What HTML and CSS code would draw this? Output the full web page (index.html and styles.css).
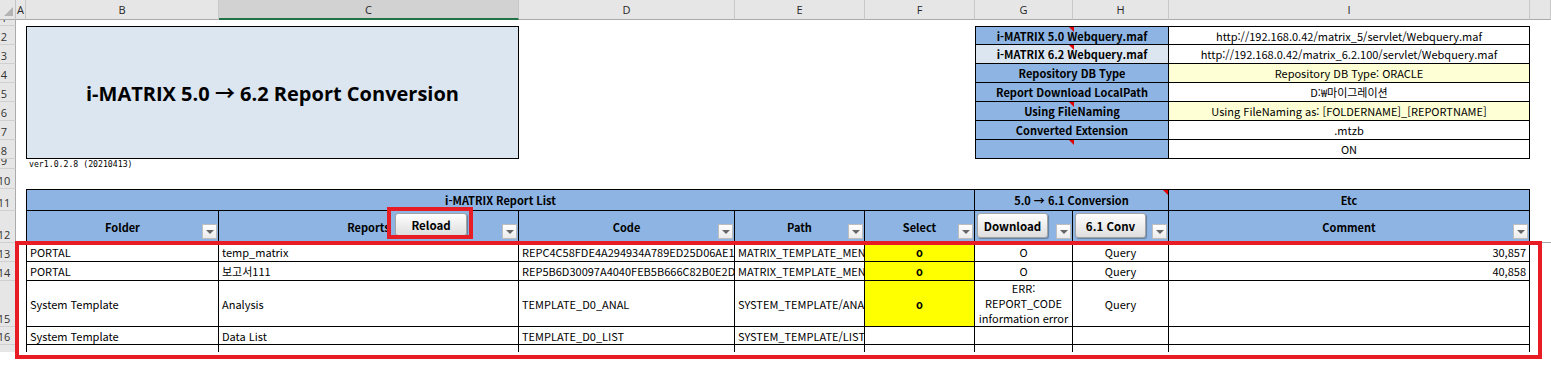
FILE: index.html
```html
<!DOCTYPE html>
<html lang="ko">
<head>
  <meta charset="UTF-8" />
  <title>i-MATRIX 5.0 → 6.2 Report Conversion</title>
  <link rel="stylesheet" href="styles.css">
</head>
<body>
  <div class="sheet">
    <!-- 열 머리글 -->
    <div class="corner"></div>
    <div class="ch">A</div>
    <div class="ch">B</div>
    <div class="ch sel">C</div>
    <div class="ch">D</div>
    <div class="ch">E</div>
    <div class="ch">F</div>
    <div class="ch">G</div>
    <div class="ch">H</div>
    <div class="ch">I</div>
    <div class="ch"></div>

    <!-- 1 -->
    <div class="rh"><span>1</span></div>
    <div class="c sp10"></div>

    <!-- 2 -->
    <div class="rh"><span>2</span></div>
    <div class="c"></div>
    <div class="title">i-MATRIX 5.0 → 6.2 Report Conversion</div>
    <div class="c sp3"></div>
    <div class="c b bl bt lbl sp2">i-MATRIX 5.0 Webquery.maf<i class="memo"></i></div>
    <div class="c b bt ctr">http://192.168.0.42/matrix_5/servlet/Webquery.maf</div>
    <div class="c"></div>

    <!-- 3 -->
    <div class="rh"><span>3</span></div>
    <div class="c"></div>
    <div class="c sp3"></div>
    <div class="c b bl lbl light sp2">i-MATRIX 6.2 Webquery.maf<i class="memo"></i></div>
    <div class="c b ctr">http://192.168.0.42/matrix_6.2.100/servlet/Webquery.maf</div>
    <div class="c"></div>

    <!-- 4 -->
    <div class="rh"><span>4</span></div>
    <div class="c"></div>
    <div class="c sp3"></div>
    <div class="c b bl lbl sp2">Repository DB Type</div>
    <div class="c b ctr cream">Repository DB Type: ORACLE</div>
    <div class="c"></div>

    <!-- 5 -->
    <div class="rh"><span>5</span></div>
    <div class="c"></div>
    <div class="c sp3"></div>
    <div class="c b bl lbl sp2">Report Download LocalPath</div>
    <div class="c b ctr">D:₩마이그레이션</div>
    <div class="c"></div>

    <!-- 6 -->
    <div class="rh"><span>6</span></div>
    <div class="c"></div>
    <div class="c sp3"></div>
    <div class="c b bl lbl sp2">Using FileNaming<i class="memo"></i></div>
    <div class="c b ctr cream">Using FileNaming as: [FOLDERNAME]_[REPORTNAME]</div>
    <div class="c"></div>

    <!-- 7 -->
    <div class="rh"><span>7</span></div>
    <div class="c"></div>
    <div class="c sp3"></div>
    <div class="c b bl lbl sp2">Converted Extension</div>
    <div class="c b ctr">.mtzb</div>
    <div class="c"></div>

    <!-- 8 -->
    <div class="rh"><span>8</span></div>
    <div class="c"></div>
    <div class="c sp3"></div>
    <div class="c b bl lbl sp2"><i class="memo"></i></div>
    <div class="c b ctr">ON</div>
    <div class="c"></div>

    <!-- 9 -->
    <div class="rh"><span>9</span></div>
    <div class="c"></div>
    <div class="c ver sp9">ver1.0.2.8 (20210413)</div>

    <!-- 10 -->
    <div class="rh"><span>10</span></div>
    <div class="c sp10"></div>

    <!-- 11 -->
    <div class="rh"><span>11</span></div>
    <div class="c"></div>
    <div class="c b bl bt hd ctr sp5">i-MATRIX Report List</div>
    <div class="c b bt hd ctr sp2">5.0 → 6.1 Conversion<i class="memo end"></i></div>
    <div class="c b bt hd ctr">Etc</div>
    <div class="c"></div>

    <!-- 12 -->
    <div class="rh"><span>12</span></div>
    <div class="c"></div>
    <div class="c b bl hd ctr">Folder<i class="filter"></i></div>
    <div class="c b hd ctr">Reports<button class="btn btn-reload">Reload</button><i class="filter"></i></div>
    <div class="c b hd ctr">Code<i class="filter"></i></div>
    <div class="c b hd ctr">Path<i class="filter"></i></div>
    <div class="c b hd ctr">Select<i class="filter"></i></div>
    <div class="c b hd"><button class="btn btn-conv">Download</button><i class="filter"></i></div>
    <div class="c b hd"><button class="btn btn-conv">6.1 Conv</button><i class="filter"></i></div>
    <div class="c b hd ctr">Comment<i class="filter"></i></div>
    <div class="c freeze"></div>

    <!-- 13 -->
    <div class="rh"><span>13</span></div>
    <div class="c"></div>
    <div class="c b bl">PORTAL</div>
    <div class="c b">temp_matrix</div>
    <div class="c b">REPC4C58FDE4A294934A789ED25D06AE10C</div>
    <div class="c b">MATRIX_TEMPLATE_MENU</div>
    <div class="c b ctr yel">o</div>
    <div class="c b ctr">O</div>
    <div class="c b ctr">Query</div>
    <div class="c b rt">30,857</div>
    <div class="c"></div>

    <!-- 14 -->
    <div class="rh"><span>14</span></div>
    <div class="c"></div>
    <div class="c b bl">PORTAL</div>
    <div class="c b">보고서111</div>
    <div class="c b">REP5B6D30097A4040FEB5B666C82B0E2D20A</div>
    <div class="c b">MATRIX_TEMPLATE_MENU</div>
    <div class="c b ctr yel">o</div>
    <div class="c b ctr">O</div>
    <div class="c b ctr">Query</div>
    <div class="c b rt">40,858</div>
    <div class="c"></div>

    <!-- 15 -->
    <div class="rh"><span>15</span></div>
    <div class="c"></div>
    <div class="c b bl">System Template</div>
    <div class="c b">Analysis</div>
    <div class="c b">TEMPLATE_D0_ANAL</div>
    <div class="c b">SYSTEM_TEMPLATE/ANALYSIS</div>
    <div class="c b ctr yel">o</div>
    <div class="c b ctr wrap">ERR:<br>REPORT_CODE<br>information error</div>
    <div class="c b ctr">Query</div>
    <div class="c b rt"></div>
    <div class="c"></div>

    <!-- 16 -->
    <div class="rh"><span>16</span></div>
    <div class="c"></div>
    <div class="c b bl">System Template</div>
    <div class="c b">Data List</div>
    <div class="c b">TEMPLATE_D0_LIST</div>
    <div class="c b">SYSTEM_TEMPLATE/LIST</div>
    <div class="c b"></div>
    <div class="c b"></div>
    <div class="c b"></div>
    <div class="c b"></div>
    <div class="c"></div>

    <!-- 17 -->
    <div class="rh last"></div>
    <div class="c"></div>
    <div class="c br bl"></div>
    <div class="c br"></div>
    <div class="c br"></div>
    <div class="c br"></div>
    <div class="c br"></div>
    <div class="c br"></div>
    <div class="c br"></div>
    <div class="c br"></div>
    <div class="c"></div>

    <!-- 강조 표시 -->
    <div class="mark mark-rows"></div>
    <div class="mark mark-reload"></div>
  </div>
</body>
</html>
```

FILE: styles.css
```css
:root {
  --header-bg: #e6e6e6;
  --header-line: #d0d0d0;
  --blue: #8db4e2;
  --light-blue: #dce6f1;
  --cream: #ffffd5;
  --mark-red: #e81c24;
}
* {
  box-sizing: border-box;
  margin: 0;
  padding: 0;
}
body {
  font-family: 'Noto Sans CJK KR', sans-serif;
  font-size: 11px;
  color: #000;
  background-color: #fff;
  width: 1551px;
  height: 375px;
  overflow: hidden;
}
.sheet {
  position: relative;
  display: grid;
  grid-template-columns: 16px 10px 193px 300px 216px 130px 110px 98px 96px 361px 21px;
  grid-template-rows: 20px 6px repeat(7, 19px) 10px 20px 22px 32px 19px 19px 46px 18px 7px;
}

/* 머리글 */
.corner {
  position: relative;
  background-color: var(--header-bg);
  border-right: 1px solid #c4c4c4;
  border-bottom: 1px solid #ababab;
}
.corner:after {
  content: '';
  position: absolute;
  right: 2px;
  bottom: 3px;
  border-left: 9px solid transparent;
  border-bottom: 9px solid #b4b4b4;
}
.ch {
  display: flex;
  align-items: center;
  justify-content: center;
  background-color: var(--header-bg);
  border-right: 1px solid #c8c8c8;
  border-bottom: 1px solid #ababab;
  font-family: 'Open Sans', sans-serif;
  font-size: 11px;
  color: #262626;
}
.ch.sel {
  background-color: #d2d2d2;
  border-bottom: 2px solid #217346;
}
.rh {
  display: flex;
  align-items: flex-end;
  overflow: hidden;
  background-color: var(--header-bg);
  border-right: 1px solid #ababab;
  border-bottom: 1px solid var(--header-line);
  font-family: 'Open Sans', sans-serif;
  font-size: 11px;
  line-height: 14px;
  color: #333;
}
.rh span {
  flex: none;
  width: 24px;
  margin-left: -8px;
  text-align: center;
}
.rh.last {
  border-bottom: none;
}

/* 셀 */
.c {
  position: relative;
  display: flex;
  align-items: center;
  min-width: 0;
  padding: 0 3px;
  white-space: nowrap;
  overflow: hidden;
  line-height: 14px;
}
.b {
  border-right: 1px solid #000;
  border-bottom: 1px solid #000;
}
.br {
  border-right: 1px solid #000;
}
.bl {
  border-left: 1px solid #000;
}
.bt {
  border-top: 1px solid #000;
}
.ctr {
  justify-content: center;
}
.rt {
  justify-content: flex-end;
}
.sp2 { grid-column: span 2; }
.sp3 { grid-column: span 3; }
.sp5 { grid-column: span 5; }
.sp9 { grid-column: span 9; }
.sp10 { grid-column: span 10; }

.title {
  grid-column: span 2;
  grid-row: span 7;
  display: flex;
  align-items: center;
  justify-content: center;
  background-color: var(--light-blue);
  border: 1px solid #000;
  font-family: 'Open Sans', 'Noto Sans CJK KR', sans-serif;
  font-size: 20px;
  font-weight: bold;
}
.lbl {
  justify-content: center;
  background-color: var(--blue);
  font-weight: bold;
  overflow: visible;
}
.lbl.light {
  background-color: var(--light-blue);
}
.cream {
  background-color: var(--cream);
}
.hd {
  background-color: var(--blue);
  font-weight: bold;
  overflow: visible;
}
.yel {
  background-color: #ffff00;
  font-weight: bold;
}
.wrap {
  padding: 0;
  text-align: center;
  line-height: 15px;
}
.ver {
  align-items: flex-end;
  overflow: visible;
  font-family: 'DejaVu Sans Mono', monospace;
  font-size: 8.2px;
  line-height: 10px;
}
.freeze {
  border-bottom: 1px solid #a6a6a6;
}

/* 메모 표시 */
.memo {
  position: absolute;
  top: 0;
  left: 93px;
  border-left: 5px solid transparent;
  border-top: 5px solid #e00000;
}
.memo.end {
  left: auto;
  right: 0;
}

/* 필터 버튼 */
.filter {
  position: absolute;
  right: 1px;
  bottom: 3px;
  width: 15px;
  height: 15px;
  background: linear-gradient(#ffffff, #ebebeb);
  border: 1px solid #bdbdbd;
}
.filter:after {
  content: '';
  position: absolute;
  left: 3px;
  top: 5px;
  border-left: 4px solid transparent;
  border-right: 4px solid transparent;
  border-top: 4px solid #666;
}

/* 양식 단추 */
.btn {
  position: absolute;
  top: 2px;
  font-family: 'Noto Sans CJK KR', sans-serif;
  font-size: 11.5px;
  font-weight: bold;
  line-height: 14px;
  color: #000;
  background: linear-gradient(#fefefe, #dedede);
  border: 1px solid #a3a3a3;
  border-radius: 3px;
  box-shadow: 1px 1px 1px rgba(0, 0, 0, 0.3);
}
.btn-reload {
  left: 176px;
  width: 72px;
  height: 23px;
}
.btn-conv {
  left: 2px;
  width: 71px;
  height: 25px;
}

/* 빨간 강조 */
.mark {
  position: absolute;
  border: 4px solid var(--mark-red);
}
.mark-rows {
  left: 15px;
  top: 241px;
  width: 1527px;
  height: 118px;
}
.mark-reload {
  left: 387px;
  top: 207px;
  width: 86px;
  height: 32px;
}
```
